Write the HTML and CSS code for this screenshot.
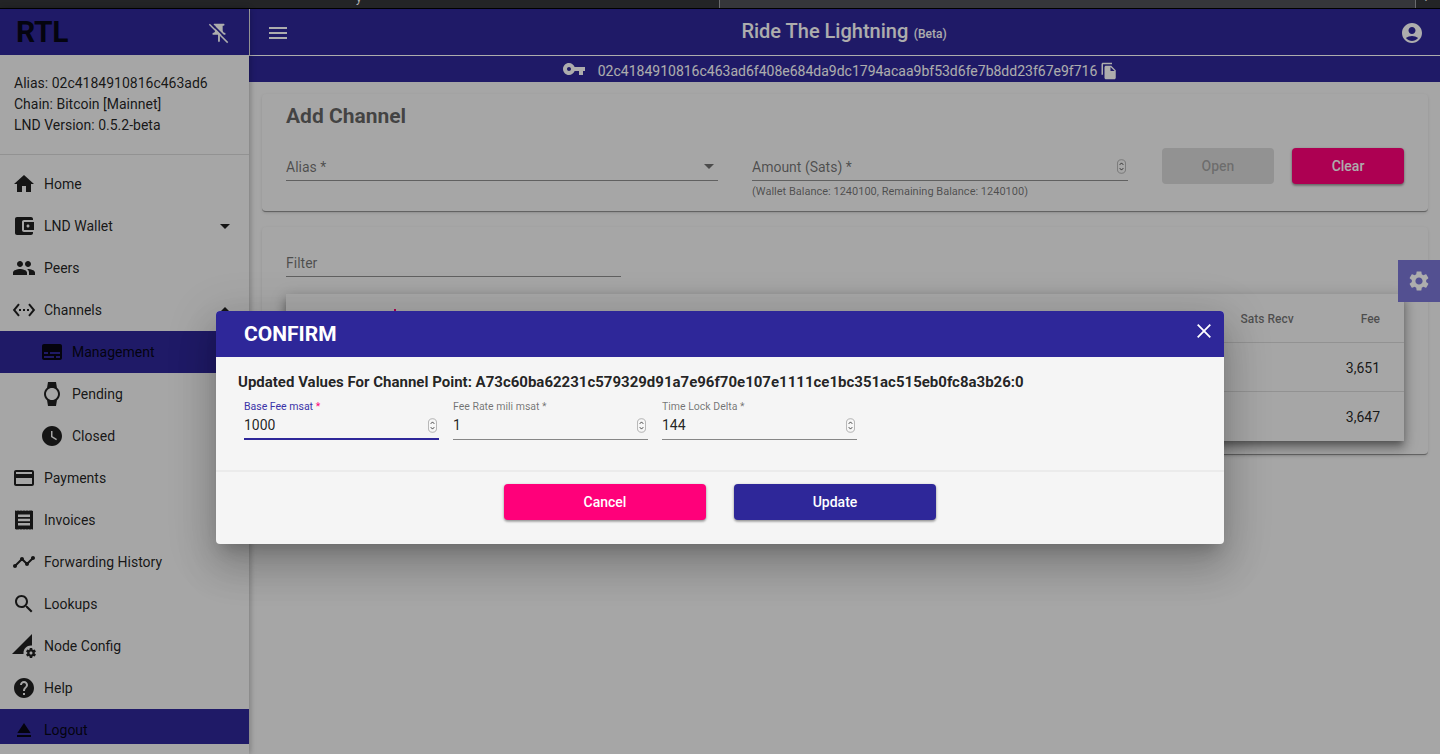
FILE: index.html
```html
<!DOCTYPE html>
<html lang="en">
<head>
<meta charset="utf-8">
<title>RTL</title>
<link rel="stylesheet" href="styles.css">
</head>
<body>
<div class="strip">
  <div class="strip-left"><span class="strip-text">y</span></div>
  <div class="strip-right"></div>
  <div class="strip-add"><span class="strip-plus">+</span></div>
</div>
<div class="app">
  <aside class="sidebar">
    <div class="side-head">
      <span class="logo">RTL</span>
      <svg class="pin" viewBox="0 0 24 24"><path d="M16 9V4h1c.55 0 1-.45 1-1s-.45-1-1-1H7c-.55 0-1 .45-1 1s.45 1 1 1h1v5c0 1.66-1.34 3-3 3v2h5.97v7l1 1 1-1v-7H19v-2c-1.66 0-3-1.34-3-3z"/><path class="pin-gap" d="M2.500 .5 22.500 20.500"/><path class="pin-slash" d="M1.500 2.500 21.500 22.500"/></svg>
    </div>
    <div class="node-info">
      <div>Alias: 02c4184910816c463ad6</div>
      <div>Chain: Bitcoin [Mainnet]</div>
      <div>LND Version: 0.5.2-beta</div>
    </div>
    <nav class="nav">
      <a class="item"><svg class="ic" viewBox="0 0 24 24"><path d="M10 20v-6h4v6h5v-8h3L12 3 2 12h3v8z"/></svg>Home</a>
      <a class="item"><svg class="ic" viewBox="0 0 24 24"><path d="M21 18v1c0 1.1-.9 2-2 2H5c-1.11 0-2-.9-2-2V5c0-1.1.89-2 2-2h14c1.1 0 2 .9 2 2v1h-9c-1.11 0-2 .9-2 2v8c0 1.1.89 2 2 2h9zm-9-2h10V8H12v8zm4-2.5c-.83 0-1.5-.67-1.5-1.5s.67-1.5 1.5-1.5 1.5.67 1.5 1.5-.67 1.5-1.5 1.5z"/></svg>LND Wallet<i class="caret-down"></i></a>
      <a class="item"><svg class="ic" viewBox="0 0 24 24"><path d="M16 11c1.66 0 2.99-1.34 2.99-3S17.66 5 16 5c-1.66 0-3 1.34-3 3s1.34 3 3 3zm-8 0c1.66 0 2.99-1.34 2.99-3S9.66 5 8 5C6.34 5 5 6.34 5 8s1.34 3 3 3zm0 2c-2.33 0-7 1.17-7 3.5V19h14v-2.5c0-2.33-4.67-3.5-7-3.5zm8 0c-.29 0-.62.02-.97.05 1.16.84 1.97 1.97 1.97 3.45V19h6v-2.5c0-2.33-4.67-3.5-7-3.5z"/></svg>Peers</a>
      <a class="item"><svg class="ic" viewBox="0 0 24 24"><path d="M7.77 6.76L6.23 5.48.82 12l5.41 6.52 1.54-1.28L3.42 12l4.35-5.24zM7 13h2v-2H7v2zm10-2h-2v2h2v-2zm-6 2h2v-2h-2v2zm6.77-7.52l-1.54 1.28L20.58 12l-4.35 5.24 1.54 1.28L23.18 12l-5.41-6.52z"/></svg>Channels<i class="caret-up"></i></a>
      <a class="item sub active"><svg class="ic" viewBox="0 0 24 24"><path d="M20 4H4c-1.1 0-2 .9-2 2v12c0 1.1.9 2 2 2h16c1.1 0 2-.9 2-2V6c0-1.1-.9-2-2-2zM4 12h4v2H4v-2zm10 6H4v-2h10v2zm6 0h-4v-2h4v2zm0-4H10v-2h10v2z"/></svg>Management</a>
      <a class="item sub"><svg class="ic" viewBox="0 0 24 24"><path d="M20 12c0-2.54-1.19-4.81-3.04-6.27L16 0H8l-.95 5.73C5.19 7.19 4 9.45 4 12s1.19 4.81 3.05 6.27L8 24h8l.96-5.73C18.81 16.81 20 14.54 20 12zM6 12c0-3.31 2.69-6 6-6s6 2.69 6 6-2.69 6-6 6-6-2.69-6-6z"/></svg>Pending</a>
      <a class="item sub"><svg class="ic" viewBox="0 0 24 24"><path d="M12 2C6.5 2 2 6.5 2 12s4.5 10 10 10 10-4.5 10-10S17.500 2 12 2zm4.200 14.200L11 13V7h1.500v5.200l4.500 2.700-.8 1.300z"/></svg>Closed</a>
      <a class="item"><svg class="ic" viewBox="0 0 24 24"><path d="M20 4H4c-1.110 0-1.990.89-1.990 2L2 18c0 1.110.89 2 2 2h16c1.110 0 2-.89 2-2V6c0-1.110-.89-2-2-2zm0 14H4v-6h16v6zm0-10H4V6h16v2z"/></svg>Payments</a>
      <a class="item"><svg class="ic" viewBox="0 0 24 24"><path fill-rule="evenodd" d="M3 3l.75-.75.75.75.75-.75.75.75.75-.75.75.75.75-.75.75.75.75-.75.75.75.75-.75.75.75.75-.75.75.75.75-.75.75.75.75-.75.75.75.75-.75.75.75.75-.75L21 3v18l-.75.75-.75-.75-.75.75-.75-.75-.75.75-.75-.75-.75.75-.75-.75-.75.75-.75-.75-.75.75-.75-.75-.75.75-.75-.75-.75.75-.75-.75-.75.75-.75-.75-.75.75-.75-.75-.75.75L3 21zM6 6.500v2.500h12V6.500zM6 10.800v2.500h12v-2.500zM6 15.100v2.500h12v-2.500z"/></svg>Invoices</a>
      <a class="item"><svg class="ic" viewBox="0 0 24 24"><path d="M23 8c0 1.100-.9 2-2 2-.18 0-.35-.02-.51-.07l-3.560 3.550c.05.16.07.34.07.52 0 1.100-.9 2-2 2s-2-.9-2-2c0-.18.02-.36.07-.52l-2.550-2.550c-.16.05-.34.07-.52.07s-.36-.02-.52-.07l-4.550 4.560c.05.16.07.33.07.51 0 1.100-.9 2-2 2s-2-.9-2-2 .9-2 2-2c.18 0 .35.02.51.07l4.560-4.550C8.020 9.360 8 9.180 8 9c0-1.100.9-2 2-2s2 .9 2 2c0 .18-.02.36-.07.52l2.550 2.550c.16-.05.34-.07.52-.07s.36.02.52.07l3.550-3.560C19.020 8.350 19 8.180 19 8c0-1.100.9-2 2-2s2 .9 2 2z"/></svg>Forwarding History</a>
      <a class="item"><svg class="ic" viewBox="0 0 24 24"><path d="M15.500 14h-.79l-.28-.27C15.410 12.590 16 11.110 16 9.500 16 5.910 13.090 3 9.500 3S3 5.910 3 9.500 5.910 16 9.500 16c1.610 0 3.090-.59 4.230-1.570l.27.28v.79l5 4.990L20.490 19l-4.990-5zm-6 0C7.010 14 5 11.990 5 9.500S7.010 5 9.500 5 14 7.010 14 9.500 11.990 14 9.500 14z"/></svg>Lookups</a>
      <a class="item"><svg class="ic" viewBox="0 0 24 24"><path d="M18.990 11.500c.34 0 .67.03 1 .07L20 0 0 20h11.560c-.04-.33-.07-.66-.07-1 0-4.140 3.360-7.500 7.500-7.500zm3.710 7.990c.02-.16.04-.32.04-.49 0-.17-.01-.33-.04-.49l1.060-.83c.09-.08.12-.21.06-.32l-1-1.730c-.06-.11-.19-.15-.31-.11l-1.240.5c-.26-.2-.54-.37-.85-.49l-.19-1.320c-.01-.12-.12-.21-.24-.21h-2c-.12 0-.23.09-.25.21l-.19 1.320c-.3.13-.59.29-.85.49l-1.240-.5c-.11-.04-.24 0-.31.11l-1 1.730c-.06.11-.04.24.06.32l1.060.83c-.02.16-.03.32-.03.49 0 .17.01.33.03.49l-1.060.83c-.09.08-.12.21-.06.32l1 1.730c.06.11.19.15.31.11l1.240-.5c.26.2.54.37.85.49l.19 1.320c.02.12.12.21.25.21h2c.12 0 .23-.09.25-.21l.19-1.320c.3-.13.59-.29.84-.49l1.250.5c.11.04.24 0 .31-.11l1-1.730c.06-.11.03-.24-.06-.32l-1.070-.83zm-3.710 1.010c-.83 0-1.500-.67-1.500-1.500s.67-1.500 1.500-1.500 1.500.67 1.500 1.500-.67 1.500-1.500 1.500z"/></svg>Node Config</a>
      <a class="item"><svg class="ic" viewBox="0 0 24 24"><path d="M12 2C6.480 2 2 6.480 2 12s4.480 10 10 10 10-4.480 10-10S17.520 2 12 2zm1 17h-2v-2h2v2zm2.070-7.750l-.9.92C13.450 12.900 13 13.500 13 15h-2v-.5c0-1.100.45-2.100 1.170-2.830l1.240-1.260c.37-.36.59-.86.59-1.410 0-1.100-.9-2-2-2s-2 .9-2 2H8c0-2.210 1.790-4 4-4s4 1.790 4 4c0 .88-.36 1.680-.93 2.250z"/></svg>Help</a>
      <a class="item active"><svg class="ic" viewBox="0 0 24 24"><path d="M5 17h14v2H5zm7-12L5.330 15h13.340z"/></svg>Logout</a>
    </nav>
  </aside>
  <div class="main">
    <header class="topbar">
      <svg class="menu" viewBox="0 0 24 24"><path d="M3 18h18v-2H3v2zm0-5h18v-2H3v2zm0-7v2h18V6H3z"/></svg>
      <div class="brand"><span class="brand-name">Ride The Lightning</span> <span class="brand-beta">(Beta)</span></div>
      <svg class="user" viewBox="0 0 24 24"><path d="M12 2C6.480 2 2 6.480 2 12s4.480 10 10 10 10-4.480 10-10S17.520 2 12 2zm0 4c1.930 0 3.500 1.570 3.500 3.500S13.930 13 12 13s-3.500-1.570-3.500-3.500S10.070 6 12 6zm0 14c-2.030 0-4.430-.82-6.140-2.880C7.550 15.800 9.680 15 12 15s4.450.8 6.140 2.120C16.430 19.180 14.030 20 12 20z"/></svg>
    </header>
    <div class="pubkey">
      <svg class="key" viewBox="0 0 24 24"><path d="M12.650 10C11.830 7.670 9.610 6 7 6c-3.310 0-6 2.690-6 6s2.690 6 6 6c2.610 0 4.830-1.670 5.650-4H17v4h4v-4h2v-4H12.650zM7 14c-1.100 0-2-.9-2-2s.9-2 2-2 2 .9 2 2-.9 2-2 2z"/></svg>
      <span class="pubkey-text">02c4184910816c463ad6f408e684da9dc1794acaa9bf53d6fe7b8dd23f67e9f716</span>
      <svg class="copy" viewBox="0 0 24 24"><path d="M16 1H4c-1.100 0-2 .9-2 2v14h2V3h12V1zm-1 4l6 6v10c0 1.100-.9 2-2 2H7.990C6.890 23 6 22.100 6 21l.01-14c0-1.100.89-2 2-2h7zm-1 7h5.500L14 6.500V12z"/></svg>
    </div>
    <div class="content">
      <section class="card add-card">
        <h2 class="card-title">Add Channel</h2>
        <div class="add-row">
          <div class="field alias-field">
            <div class="line"><span class="ph">Alias *</span><i class="caret-select"></i></div>
          </div>
          <div class="field amount-field">
            <div class="line"><span class="ph">Amount (Sats) *</span><svg class="spin" viewBox="0 0 10 16"><rect x=".5" y=".5" width="9" height="15" rx="4.500"/><path d="M3 6.200 5 4l2 2.200M3 9.800 5 12l2-2.200"/></svg></div>
            <div class="hint">(Wallet Balance: 1240100, Remaining Balance: 1240100)</div>
          </div>
          <button class="btn btn-disabled">Open</button>
          <button class="btn btn-pink">Clear</button>
        </div>
      </section>
      <section class="card list-card">
        <div class="filter"><span class="ph">Filter</span></div>
        <div class="table">
          <div class="thead"><span class="sort-mark"></span><span class="col-recv">Sats Recv</span><span class="col-fee">Fee</span></div>
          <div class="trow"><span class="col-fee">3,651</span></div>
          <div class="trow"><span class="col-fee">3,647</span></div>
        </div>
      </section>
    </div>
  </div>
  <div class="gear-tab"><svg viewBox="0 0 24 24"><path d="M19.140 12.940c.04-.3.06-.61.06-.94 0-.32-.02-.64-.07-.94l2.030-1.580c.18-.14.23-.41.12-.61l-1.920-3.320c-.12-.22-.37-.29-.59-.22l-2.390.96c-.5-.38-1.030-.7-1.620-.94l-.36-2.540c-.04-.24-.24-.41-.48-.41h-3.840c-.24 0-.43.17-.47.41l-.36 2.540c-.59.24-1.130.57-1.620.94l-2.390-.96c-.22-.08-.47 0-.59.22L2.740 8.870c-.12.21-.08.47.12.61l2.030 1.580c-.05.3-.09.63-.09.94s.02.64.07.94l-2.030 1.580c-.18.14-.23.41-.12.61l1.920 3.320c.12.22.37.29.59.22l2.390-.96c.5.38 1.030.7 1.620.94l.36 2.540c.05.24.24.41.48.41h3.840c.24 0 .44-.17.47-.41l.36-2.540c.59-.24 1.130-.56 1.620-.94l2.390.96c.22.08.47 0 .59-.22l1.920-3.320c.12-.22.07-.47-.12-.61l-2.010-1.580zM12 15.600c-1.980 0-3.600-1.620-3.600-3.600s1.620-3.600 3.600-3.600 3.600 1.620 3.600 3.600-1.620 3.600-3.600 3.600z"/></svg></div>
  <div class="backdrop"></div>
  <div class="modal">
    <div class="modal-head">
      <span class="modal-title">CONFIRM</span>
      <svg class="close" viewBox="0 0 14 14"><path d="M.7.7 13.300 13.300M13.300.7.7 13.300"/></svg>
    </div>
    <div class="modal-body">
      <div class="modal-msg">Updated Values For Channel Point: A73c60ba62231c579329d91a7e96f70e107e1111ce1bc351ac515eb0fc8a3b26:0</div>
      <div class="modal-fields">
        <div class="mfield focus">
          <label class="mlabel">Base Fee msat <b class="req">*</b></label>
          <div class="mvalue">1000<svg class="spin" viewBox="0 0 10 16"><rect x=".5" y=".5" width="9" height="15" rx="4.500"/><path d="M3 6.200 5 4l2 2.200M3 9.800 5 12l2-2.200"/></svg></div>
        </div>
        <div class="mfield">
          <label class="mlabel">Fee Rate mili msat *</label>
          <div class="mvalue">1<svg class="spin" viewBox="0 0 10 16"><rect x=".5" y=".5" width="9" height="15" rx="4.500"/><path d="M3 6.200 5 4l2 2.200M3 9.800 5 12l2-2.200"/></svg></div>
        </div>
        <div class="mfield">
          <label class="mlabel">Time Lock Delta *</label>
          <div class="mvalue">144<svg class="spin" viewBox="0 0 10 16"><rect x=".5" y=".5" width="9" height="15" rx="4.500"/><path d="M3 6.200 5 4l2 2.200M3 9.800 5 12l2-2.200"/></svg></div>
        </div>
      </div>
    </div>
    <div class="modal-actions">
      <button class="btn mbtn btn-pink">Cancel</button>
      <button class="btn mbtn btn-indigo">Update</button>
    </div>
  </div>
</div>
</body>
</html>
```

FILE: styles.css
```css
* { box-sizing: border-box; }
html, body { margin: 0; height: 100%; overflow: hidden; }
body {
  font-family: Roboto, "Noto Sans", "Liberation Sans", sans-serif;
  font-size: 14px;
  color: rgba(0, 0, 0, .87);
  background: #f5f5f5;
  display: flex;
  flex-direction: column;
}
svg { fill: currentColor; flex: none; display: block; }

.strip {
  height: 9px;
  flex: none;
  display: flex;
  background: #000;
  padding-bottom: 1px;
  overflow: hidden;
}
.strip-left { width: 719px; background: #232426; position: relative; }
.strip-right { flex: 1; background: #35363a; border-left: 1px solid #6a6b6e; }
.strip-add { width: 25px; background: #232426; border-left: 1px solid #6a6b6e; position: relative; }
.strip-text { position: absolute; left: 356px; top: -9px; font-size: 12px; color: #b5b5b5; }
.strip-plus { position: absolute; left: 6px; top: -11px; font-size: 14px; color: #c8c8c8; }

.app { position: relative; flex: 1; min-height: 0; display: flex; }

/* sidebar */
.sidebar {
  width: 249px;
  flex: none;
  display: flex;
  flex-direction: column;
  background: #f5f5f5;
  box-shadow: 1px 0 6px rgba(0, 0, 0, .28);
  position: relative;
  z-index: 1;
}
.side-head {
  height: 46px;
  flex: none;
  background: #2e2799;
  display: flex;
  align-items: center;
  justify-content: space-between;
  padding: 0 19px 0 16px;
}
.logo { font-size: 30px; font-weight: 700; line-height: 1; letter-spacing: -.3px; color: rgba(0, 0, 0, .87); }
.pin { width: 22px; height: 22px; color: #fff; margin-top: 1px; }
.pin-gap { stroke: #2e2799; stroke-width: 1.8; fill: none; }
.pin-slash { stroke: #fff; stroke-width: 1.6; fill: none; }
.node-info {
  height: 100px;
  flex: none;
  padding: 18px 14px 0;
  line-height: 21px;
  border-bottom: 1px solid rgba(0, 0, 0, .12);
}
.nav { height: 581px; flex: none; margin-top: 8px; overflow: hidden; }
.item {
  height: 42px;
  display: flex;
  align-items: center;
  gap: 8px;
  padding-left: 12px;
  position: relative;
  color: rgba(0, 0, 0, .87);
}
.item.sub { padding-left: 40px; }
.item.active { background: #2e2799; }
.ic { width: 24px; height: 24px; }
.caret-down, .caret-up {
  position: absolute;
  left: 220px;
  width: 0;
  height: 0;
  border-left: 5px solid transparent;
  border-right: 5px solid transparent;
}
.caret-down { top: 19px; border-top: 5px solid rgba(0, 0, 0, .87); }
.caret-up { top: 18px; border-bottom: 5px solid rgba(0, 0, 0, .87); }

/* main */
.main { flex: 1; min-width: 0; display: flex; flex-direction: column; }
.topbar {
  height: 47px;
  flex: none;
  background: #2e2799;
  color: #fff;
  border-left: 1px solid #fff;
  border-bottom: 1px solid #fff;
  display: flex;
  align-items: center;
  padding: 2px 16px 0 16px;
}
.menu { width: 24px; height: 24px; }
.user { width: 24px; height: 24px; }
.brand { flex: 1; text-align: center; font-weight: 500; line-height: 1; margin-bottom: 4px; padding-right: 2px; }
.brand-name { font-size: 20px; font-weight: 500; }
.brand-beta { font-size: 12px; font-weight: 500; margin-left: 2px; }
.pubkey {
  height: 26px;
  flex: none;
  background: #2e2799;
  color: #fff;
  display: flex;
  align-items: center;
  justify-content: center;
  gap: 3px;
  font-size: 14px;
  padding-right: 9px;
}
.key { width: 24px; height: 24px; margin-right: 9px; }
.pubkey-text { padding-top: 4px; }
.copy { width: 18px; height: 18px; margin-top: 4px; }

.content {
  flex: 1;
  min-height: 0;
  padding: 12px 12px 0 13px;
  display: flex;
  flex-direction: column;
  gap: 15px;
}
.card {
  border-radius: 4px;
  background: #f5f5f5;
  box-shadow: 0 1px 1px -1px rgba(0, 0, 0, .2), 0 1px 3px rgba(0, 0, 0, .12);
  border-bottom: 1px solid rgba(0, 0, 0, .4);
  padding: 0 24px;
}
.add-card { height: 118px; }
.card-title { margin: 0; padding-top: 9px; font-size: 21px; line-height: 26px; font-weight: 700; color: rgba(0, 0, 0, .6); }
.add-row { display: flex; margin-top: 19px; align-items: flex-start; }
.ph { color: rgba(0, 0, 0, .54); }
.field { flex: none; }
.alias-field { width: 432px; margin-right: 34px; }
.amount-field { width: 376px; margin-right: 34px; }
.line {
  height: 33px;
  display: flex;
  align-items: center;
  justify-content: space-between;
  border-bottom: 1px solid rgba(0, 0, 0, .42);
  padding-top: 5px;
}
.caret-select {
  width: 0;
  height: 0;
  margin-right: 4px;
  border-left: 5px solid transparent;
  border-right: 5px solid transparent;
  border-top: 5px solid rgba(0, 0, 0, .54);
}
.line .spin { margin-right: 2px; }
.hint { font-size: 11px; line-height: 13px; margin-top: 4px; color: rgba(0, 0, 0, .54); }

.btn {
  height: 36px;
  border: 0;
  border-radius: 4px;
  font: 500 14px Roboto, sans-serif;
  color: #fff;
  width: 112px;
  padding: 0;
  flex: none;
}
.btn-disabled { background: rgba(0, 0, 0, .12); color: rgba(0, 0, 0, .26); margin-right: 18px; }
.btn-pink, .btn-indigo { box-shadow: 0 1px 3px rgba(0, 0, 0, .35), 0 2px 2px rgba(0, 0, 0, .14); }
.btn-pink { background: #ff007a; }
.btn-indigo { background: #2e2799; }

.list-card { height: 228px; padding-top: 22px; }
.filter {
  width: 335px;
  height: 28px;
  border-bottom: 1px solid rgba(0, 0, 0, .42);
  line-height: 29px;
}
.table {
  margin-top: 17px;
  height: 147px;
  background: #f5f5f5;
  box-shadow: 0 5px 6px -2px rgba(0, 0, 0, .3), 0 8px 10px 1px rgba(0, 0, 0, .18), 0 3px 14px 2px rgba(0, 0, 0, .16);
  position: relative;
}
.thead, .trow {
  display: flex;
  justify-content: flex-end;
  align-items: center;
  padding: 1px 24px 0 0;
  border-bottom: 1px solid rgba(0, 0, 0, .12);
  height: 49px;
}
.trow:last-child { border-bottom: 0; }
.thead { font-size: 12px; font-weight: 500; color: rgba(0, 0, 0, .54); }
.col-recv { margin-right: 67px; }
.sort-mark { position: absolute; left: 108px; top: 15px; width: 2px; height: 2px; background: #ff007a; }

.gear-tab {
  position: absolute;
  right: 0;
  top: 251px;
  width: 42px;
  height: 42px;
  background: #7b76d6;
  color: #fff;
  display: flex;
  align-items: center;
  justify-content: center;
  z-index: 1;
}
.gear-tab svg { width: 24px; height: 24px; }

/* dialog */
.backdrop { position: absolute; inset: 0; background: rgba(0, 0, 0, .32); z-index: 2; }
.modal {
  position: absolute;
  left: 216px;
  top: 302px;
  width: 1008px;
  height: 233px;
  background: #f5f5f5;
  border-radius: 4px;
  overflow: hidden;
  z-index: 3;
  box-shadow: 0 11px 15px -7px rgba(0, 0, 0, .2), 0 24px 38px 3px rgba(0, 0, 0, .14), 0 9px 46px 8px rgba(0, 0, 0, .12);
}
.modal-head {
  height: 46px;
  background: #2e2799;
  color: #fff;
  display: flex;
  align-items: center;
  justify-content: space-between;
  padding: 0 13px 0 28px;
}
.modal-title { font-size: 21px; font-weight: 700; }
.close { width: 14px; height: 14px; margin-bottom: 6px; }
.close path { stroke: #fff; stroke-width: 1.8; fill: none; }
.modal-body { height: 115px; padding: 16px 22px 0; border-bottom: 2px solid #ebebeb; }
.modal-msg { font-size: 15px; font-weight: 700; line-height: 18px; color: rgba(0, 0, 0, .87); white-space: nowrap; }
.modal-fields { display: flex; gap: 14px; margin-top: 9px; padding-left: 6px; }
.mfield { width: 195px; border-bottom: 1px solid rgba(0, 0, 0, .45); height: 40px; }
.mfield.focus { border-bottom: 2px solid #2e2799; }
.mlabel { display: block; font-size: 10.5px; line-height: 13px; color: rgba(0, 0, 0, .54); }
.focus .mlabel { color: #3a33a8; }
.req { font-weight: 400; color: #ff007a; }
.mvalue { display: flex; align-items: center; justify-content: space-between; line-height: 20px; margin-top: 2px; padding-right: 2px; }
.spin { width: 9px; height: 15px; flex: none; }
.spin rect { fill: #f7f7f7; stroke: rgba(0, 0, 0, .3); stroke-width: 1; }
.spin path { fill: none; stroke: rgba(0, 0, 0, .75); stroke-width: 1; }
.modal-actions { display: flex; justify-content: center; gap: 28px; padding-top: 12px; }
.mbtn { width: 202px; }
```
